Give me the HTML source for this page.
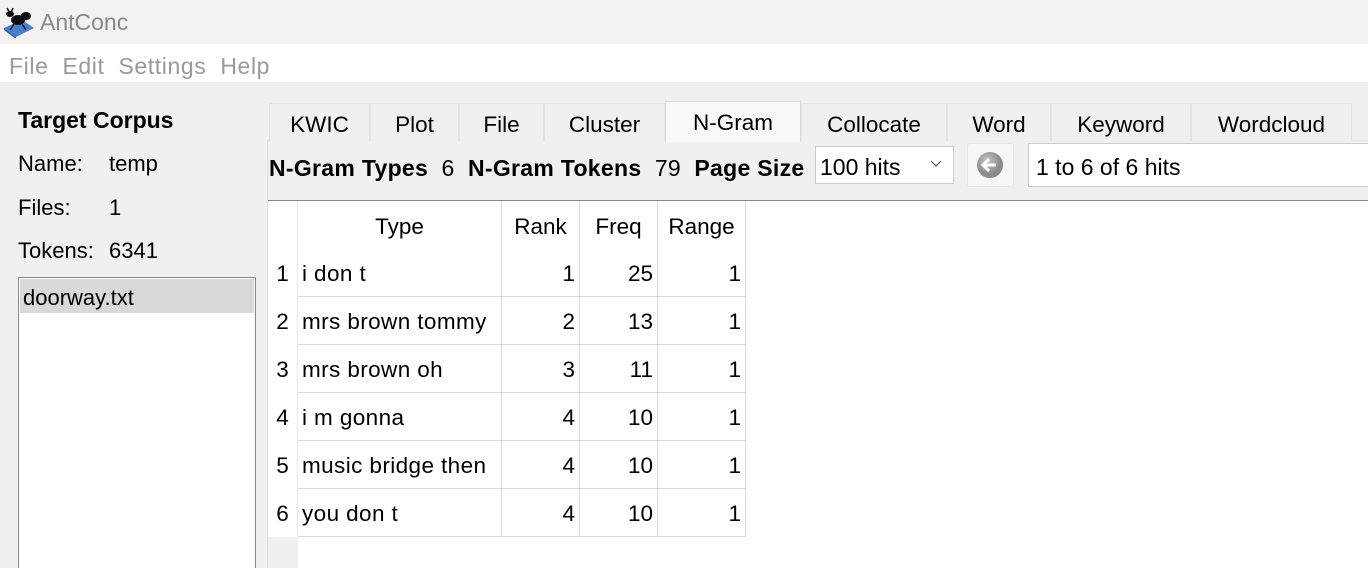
<!DOCTYPE html>
<html><head><meta charset="utf-8"><style>
*{margin:0;padding:0;box-sizing:border-box}
html{width:1368px;height:568px;overflow:hidden}
body{width:1368px;height:568px;overflow:hidden;background:#f0f0f0;font-family:"Liberation Sans",sans-serif;font-size:22px;color:#000;position:relative}
.a{position:absolute;white-space:nowrap}
.tab{position:absolute;top:103px;height:38px;border:1px solid #e2e2e2;border-bottom:none;background:#f0f0f0;text-align:center;line-height:42px;font-size:22.5px}
.b{font-weight:bold}
.cell{position:absolute;height:48px;border-right:1px solid #d8d8d8;border-bottom:1px solid #d8d8d8;line-height:50px;background:#fff;padding:0 4px;font-size:22.5px}
.r{text-align:right}
</style></head><body>
<div class="a" style="left:0;top:0;width:1368px;height:44px;background:#f2f2f2"></div>
<svg class="a" style="left:2px;top:6px" width="34" height="32" viewBox="0 0 34 32">
<path d="M2 22 L20 14 L32 22 L14 31 Z" fill="#4a7fd0"/><path d="M2 22 L14 31 L14 33 L2 24Z" fill="#2d5aa8"/>
<ellipse cx="16" cy="14" rx="7" ry="5" fill="#111"/><ellipse cx="8" cy="8" rx="4" ry="3" fill="#111"/><ellipse cx="24" cy="10" rx="5" ry="4" fill="#111"/>
<path d="M5 2 L8 7 M11 2 L9 7 M12 18 L8 24 M20 18 L24 24" stroke="#111" stroke-width="1.5"/></svg>
<div class="a" style="left:40px;top:9px;color:#888;font-size:23px">AntConc</div>
<div class="a" style="left:0;top:44px;width:1368px;height:38px;background:#fff"></div>
<div class="a" style="left:9px;top:53px;color:#999;font-size:23px;letter-spacing:0.6px">File&nbsp; Edit&nbsp; Settings&nbsp; Help</div>

<div class="a b" style="left:18px;top:107px;font-size:23px">Target Corpus</div>
<div class="a" style="left:18px;top:151px">Name:</div><div class="a" style="left:109px;top:151px">temp</div>
<div class="a" style="left:18px;top:195px">Files:</div><div class="a" style="left:109px;top:195px">1</div>
<div class="a" style="left:18px;top:238px">Tokens:</div><div class="a" style="left:109px;top:238px">6341</div>
<div class="a" style="left:18px;top:277px;width:238px;height:300px;background:#fff;border:1px solid #888"></div>
<div class="a" style="left:20px;top:279px;width:234px;height:34px;background:#d9d9d9;padding-left:3px;line-height:38px">doorway.txt</div>

<div class="a" style="left:267px;top:140px;width:1101px;height:428px;background:#f0f0f0;border-left:1px solid #dcdcdc;border-top:1px solid #e2e2e2"></div>
<div class="tab" style="left:269px;width:101px">KWIC</div>
<div class="tab" style="left:370px;width:89px">Plot</div>
<div class="tab" style="left:459px;width:85px">File</div>
<div class="tab" style="left:544px;width:121px">Cluster</div>
<div class="tab" style="left:665px;top:101px;height:41px;width:136px;background:#f9f9f9;line-height:42px;z-index:2;border-color:#ddd">N-Gram</div>
<div class="tab" style="left:801px;width:146px">Collocate</div>
<div class="tab" style="left:947px;width:104px">Word</div>
<div class="tab" style="left:1051px;width:140px">Keyword</div>
<div class="tab" style="left:1191px;width:161px">Wordcloud</div>

<div class="a" style="left:269px;top:155px;font-size:23px;letter-spacing:0.3px"><b>N-Gram Types</b>&nbsp; 6&nbsp; <b>N-Gram Tokens</b>&nbsp; 79&nbsp; <b>Page Size</b></div>
<div class="a" style="left:815px;top:146px;width:139px;height:38px;background:#fff;border:1px solid #ccc;line-height:40px;padding-left:4px;font-size:23px">100 hits</div>
<svg class="a" style="left:930px;top:160px" width="12" height="8"><path d="M1 1 L6 6 L11 1" fill="none" stroke="#555" stroke-width="1.2"/></svg>
<div class="a" style="left:967px;top:143px;width:47px;height:44px;background:#f6f6f6;border:1px solid #e6e6e6;border-radius:3px"></div>
<svg class="a" style="left:976px;top:151px" width="28" height="28" viewBox="0 0 28 28"><defs><radialGradient id="g" cx="40%" cy="35%"><stop offset="0" stop-color="#c8c8c8"/><stop offset="1" stop-color="#8a8a8a"/></radialGradient></defs><circle cx="14" cy="14" r="13" fill="url(#g)"/><path d="M20 14 H8 M13 8 L7 14 L13 20" fill="none" stroke="#fff" stroke-width="3"/></svg>
<div class="a" style="left:1028px;top:143px;width:345px;height:44px;background:#fff;border:1px solid #ccc;line-height:46px;padding-left:7px;font-size:23px">1 to 6 of 6 hits</div>

<div class="a" style="left:268px;top:200px;width:1100px;height:368px;background:#fff;border-top:1px solid #888"></div>
<div class="a" style="left:268px;top:537px;width:30px;height:31px;background:#f0f0f0"></div>
<div class="cell" style="left:298px;top:201px;width:204px;height:48px;text-align:center;line-height:52px;border-bottom:none">Type</div>
<div class="cell" style="left:502px;top:201px;width:78px;text-align:center;line-height:52px;border-bottom:none">Rank</div>
<div class="cell" style="left:580px;top:201px;width:78px;text-align:center;line-height:52px;border-bottom:none">Freq</div>
<div class="cell" style="left:658px;top:201px;width:88px;text-align:center;line-height:52px;border-bottom:none">Range</div>
<div class="cell" style="left:268px;top:201px;width:30px;border-bottom:none;border-right:1px solid #e8e8e8"></div>

<div id="rows"></div>
<script>
var d=[["i don t",1,25],["mrs brown tommy",2,13],["mrs brown oh",3,11],["i m gonna",4,10],["music bridge then",4,10],["you don t",4,10]];
var h="";
d.forEach(function(r,i){var t=249+i*48;
h+='<div class="cell" style="left:268px;top:'+t+'px;width:30px;border-bottom:none;border-right:1px solid #e8e8e8;text-align:center;padding:0">'+(i+1)+'</div>';
h+='<div class="cell" style="left:298px;top:'+t+'px;width:204px;letter-spacing:0.4px">'+r[0]+'</div>';
h+='<div class="cell r" style="left:502px;top:'+t+'px;width:78px">'+r[1]+'</div>';
h+='<div class="cell r" style="left:580px;top:'+t+'px;width:78px">'+r[2]+'</div>';
h+='<div class="cell r" style="left:658px;top:'+t+'px;width:88px">1</div>';});
document.getElementById("rows").innerHTML=h;
</script>
</body></html>
